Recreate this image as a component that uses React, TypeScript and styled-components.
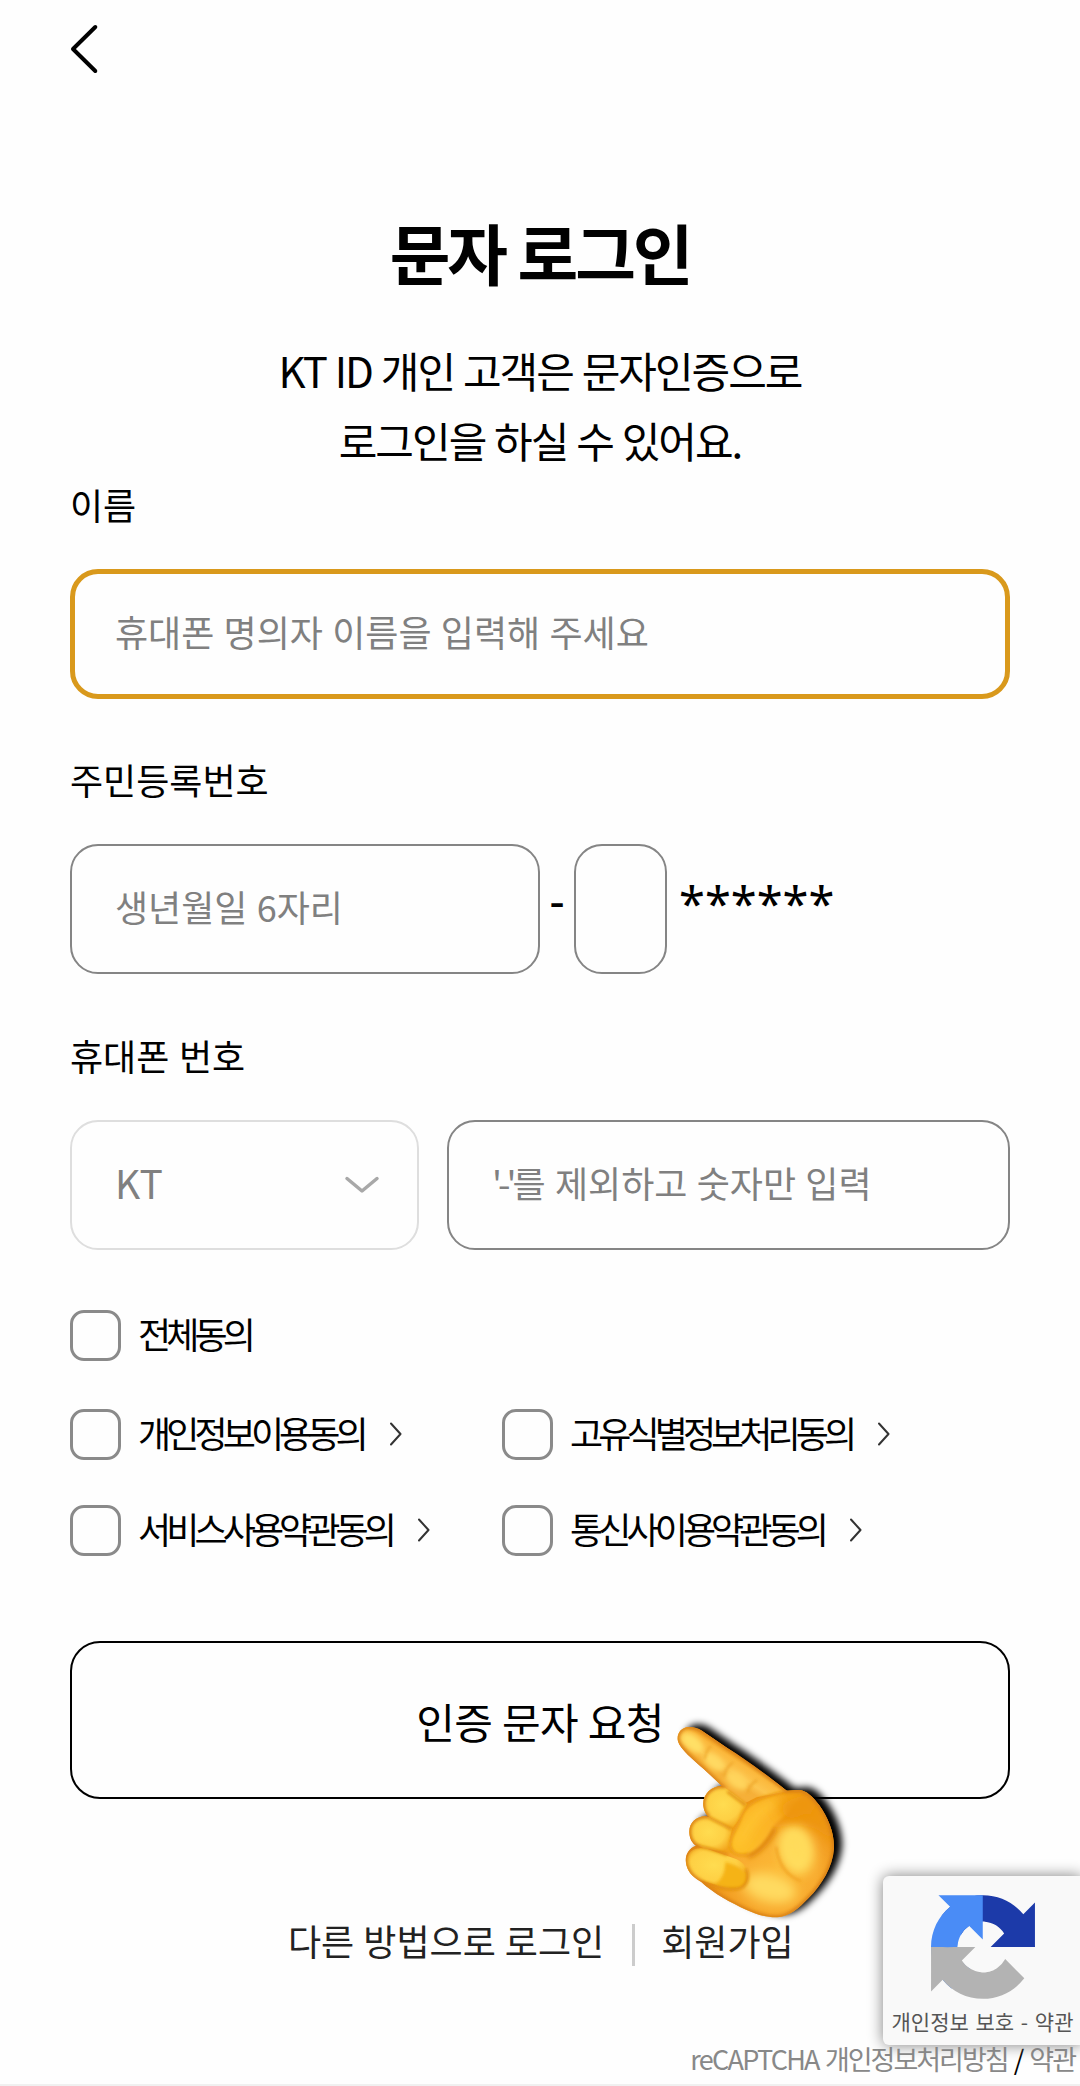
import React from "react";
import styled, { createGlobalStyle } from "styled-components";

const GlobalStyle = createGlobalStyle`
  *, *::before, *::after { box-sizing: border-box; }
  html, body { margin: 0; padding: 0; background: #fefefe; }
  body { font-family: "Noto Sans CJK KR", "Noto Sans", sans-serif; color: #000; }
`;

const Page = styled.main`
  position: relative;
  width: 1080px;
  height: 2086px;
  padding: 0 70px;
  overflow: hidden;
  background: #fefefe;
  border-bottom: 2px solid #f0f0f0;
  display: flex;
  flex-direction: column;
`;

const Header = styled.header`
  height: 97px;
  display: flex;
  align-items: center;
  flex: none;
`;

const IconButton = styled.button`
  padding: 0;
  border: 0;
  background: none;
  display: flex;
`;

const Title = styled.h1`
  margin: 109px 0 0;
  font-size: 66px;
  font-weight: 700;
  line-height: 90px;
  letter-spacing: -3.2px;
  word-spacing: 1px;
  text-align: center;
`;

const Lead = styled.p`
  margin: 39px 0 2px;
  font-size: 42px;
  line-height: 70px;
  letter-spacing: -2px;
  word-spacing: 1.4px;
  text-align: center;
`;

const FormGroup = styled.section<{ $gap: number }>`
  margin-bottom: ${(p) => p.$gap}px;
`;

const Label = styled.div`
  font-size: 36px;
  line-height: 54px;
  margin-bottom: 38px;
  word-spacing: 1.5px;
`;

const FieldRow = styled.div`
  display: flex;
  align-items: center;
`;

const Field = styled.div<{ $width?: number; $tone?: "focus" | "muted" }>`
  width: ${(p) => (p.$width ? `${p.$width}px` : "auto")};
  flex: ${(p) => (p.$width ? "none" : "1")};
  height: 130px;
  padding: 0 ${(p) => (p.$tone === "muted" ? 37 : 43)}px 6px ${(p) => (p.$tone === "focus" ? 40 : 43)}px;
  border: ${(p) => (p.$tone === "focus" ? "5px solid #d9991c" : p.$tone === "muted" ? "2px solid #dedede" : "2px solid #858585")};
  border-radius: 28px;
  display: flex;
  align-items: center;
  justify-content: space-between;
  color: #808080;
  font-size: ${(p) => (p.$tone === "muted" ? 39 : 36)}px;
  word-spacing: 1.2px;
  white-space: nowrap;

  svg { margin-top: 5px; }
`;

const Quoted = styled.span`
  letter-spacing: -4px;
`;

const Dash = styled.span`
  width: 34px;
  padding-bottom: 18px;
  text-align: center;
  font-family: "Noto Sans", sans-serif;
  font-size: 47px;
  line-height: 60px;
`;

const Mask = styled.span`
  margin-left: 12px;
  padding-bottom: 13px;
  font-family: "Noto Sans", sans-serif;
  font-size: 47px;
  line-height: 60px;
`;

const Agreements = styled.section`
  display: grid;
  grid-template-columns: 432px 1fr;
  grid-template-rows: 53px 50px 50px;
  row-gap: 46px;
  margin-bottom: 86px;
`;

const Agreement = styled.div<{ $wide?: boolean }>`
  grid-column: ${(p) => (p.$wide ? "1 / -1" : "auto")};
  height: 50px;
  display: flex;
  align-items: center;
`;

const CheckBox = styled.span`
  width: 51px;
  height: 51px;
  flex: none;
  border: 3px solid #8a8a8a;
  border-radius: 14px;
`;

const AgreementText = styled.span`
  margin-left: 17px;
  padding-bottom: 5px;
  font-size: 36px;
  line-height: 50px;
  letter-spacing: -4.9px;
  white-space: nowrap;
`;

const SubmitButton = styled.button`
  height: 158px;
  flex: none;
  padding: 0;
  border: 2px solid #000;
  border-radius: 30px;
  background: none;
  color: #000;
  font-family: inherit;
  font-size: 42px;
  letter-spacing: -0.6px;
  word-spacing: 0.8px;
`;

const Links = styled.nav`
  margin-top: 114px;
  height: 54px;
  padding-left: 218px;
  display: flex;
  align-items: center;
  gap: 28px;
  font-size: 36px;
  line-height: 54px;
  word-spacing: 1px;
  color: #222;
  white-space: nowrap;
`;

const Divider = styled.i`
  width: 3px;
  height: 42px;
  margin-top: 9px;
  margin-right: -2px;
  background: #ccc;
`;

const Policy = styled.footer`
  margin: auto -65px 3px 0;
  text-align: right;
  font-size: 27px;
  line-height: 44px;
  letter-spacing: -2px;
  word-spacing: 2px;
  color: #888;
  white-space: nowrap;

  b { font-weight: 400; color: #000; margin-right: 1px; }
`;

const Brand = styled.span`
  letter-spacing: -1.7px;
`;

const PointingHand = styled.svg`
  position: absolute;
  left: 640px;
  top: 1680px;
  width: 240px;
  height: 260px;
  overflow: visible;
`;

const Badge = styled.aside`
  position: absolute;
  right: -2px;
  top: 1876px;
  width: 199px;
  height: 169px;
  padding-top: 19px;
  border-radius: 6px 0 0 6px;
  background: #f9f9f9;
  box-shadow: 0 0 15px #808080;
  display: flex;
  flex-direction: column;
  align-items: center;
`;

const BadgeText = styled.span`
  margin-top: 7px;
  font-size: 21px;
  line-height: 30px;
  word-spacing: 2px;
  color: #555;
  white-space: nowrap;
`;

const BackIcon = () => (
  <svg width="30" height="56" viewBox="0 0 30 56" fill="none">
    <path d="M25.300 6 3 28l22.300 22" stroke="#000" strokeWidth="4" strokeLinecap="round" strokeLinejoin="round" />
  </svg>
);

const ChevronDown = () => (
  <svg width="36" height="20" viewBox="0 0 36 20" fill="none">
    <path d="m3 3.500 15 12.500 15-12.500" stroke="#a8a8a8" strokeWidth="3.500" strokeLinecap="round" strokeLinejoin="round" />
  </svg>
);

const MoreIcon = styled(({ className }: { className?: string }) => (
  <svg className={className} width="12" height="24" viewBox="0 0 12 24" fill="none">
    <path d="M1 1.500 10.500 12 1 22.500" stroke="#333" strokeWidth="2" strokeLinecap="round" strokeLinejoin="round" />
  </svg>
))`
  margin-left: 26px;
`;

const RecaptchaLogo = () => (
  <svg width="104" height="104" viewBox="0 0 64 64">
    <path fill="#1c3aa9" d="M64 31.955l-.033-1.370V4.687l-7.160 7.160C50.948 4.674 42.033.093 32.050.093c-10.400 0-19.622 4.960-25.458 12.640l11.736 11.860a15.550 15.550 0 0 1 4.754-5.334c2.050-1.600 4.952-2.906 8.968-2.906.485 0 .860.057 1.135.163 4.976.393 9.288 3.140 11.828 7.124l-8.307 8.307L64 31.953" />
    <path fill="#4a8cf6" d="M31.862.094l-1.370.033H4.594l7.160 7.160C4.580 13.147 0 22.060 0 32.046c0 10.400 4.960 19.622 12.640 25.458L24.500 45.768a15.550 15.550 0 0 1-5.334-4.754c-1.600-2.050-2.906-4.952-2.906-8.968 0-.485.057-.860.163-1.135.393-4.976 3.140-9.288 7.124-11.828l8.307 8.307L31.860.095" />
    <path fill="#b3b3b3" d="M.001 32.045l.033 1.370v25.898l7.160-7.160c5.860 7.173 14.774 11.754 24.760 11.754 10.400 0 19.622-4.960 25.458-12.640l-11.736-11.860a15.550 15.550 0 0 1-4.754 5.334c-2.050 1.600-4.952 2.906-8.968 2.906-.485 0-.860-.057-1.135-.163-4.976-.393-9.288-3.140-11.828-7.124l8.307-8.307c-10.522.040-22.400.066-27.295-.005" />
  </svg>
);

const SILHOUETTE =
  "M150 141C126 139 108 160 114 184C120 207 160 240 192 268L246 318C212 318 186 346 190 378C192 394 198 404 206 410C174 404 146 426 148 458C149 478 158 490 168 497C142 506 132 532 140 558C147 582 164 594 184 606C220 640 272 668 320 690C350 704 382 713 412 712C446 710 476 686 506 654C546 614 578 560 582 506C584 460 564 412 538 376C518 350 500 332 478 330L440 332C380 284 316 238 262 204L186 152C174 145 162 141 150 141Z";

const Hand = () => (
  <PointingHand viewBox="0 0 720 780" aria-hidden="true">
    <defs>
      <filter id="cast" x="-20%" y="-20%" width="140%" height="140%">
        <feGaussianBlur stdDeviation="11" />
      </filter>
      <filter id="soft" filterUnits="userSpaceOnUse" x="0" y="0" width="720" height="780">
        <feGaussianBlur stdDeviation="16" />
      </filter>
      <filter id="line" filterUnits="userSpaceOnUse" x="0" y="0" width="720" height="780">
        <feGaussianBlur stdDeviation="4" />
      </filter>
      <filter id="glow" filterUnits="userSpaceOnUse" x="0" y="0" width="720" height="780">
        <feGaussianBlur stdDeviation="8" />
      </filter>
      <radialGradient id="palm" cx="410" cy="570" r="200" gradientUnits="userSpaceOnUse">
        <stop offset="0" stopColor="#fcb836" />
        <stop offset="0.600" stopColor="#f8ac30" />
        <stop offset="1" stopColor="#ee9418" />
      </radialGradient>
      <linearGradient id="finger" x1="262" y1="204" x2="222" y2="266" gradientUnits="userSpaceOnUse">
        <stop offset="0" stopColor="#ee9c20" />
        <stop offset="0.250" stopColor="#fbb83c" />
        <stop offset="0.700" stopColor="#fdc650" />
        <stop offset="1" stopColor="#f6b038" />
      </linearGradient>
      <radialGradient id="knuckle" cx="0.450" cy="0.420" r="0.620">
        <stop offset="0" stopColor="#ffdc50" />
        <stop offset="0.600" stopColor="#fed044" />
        <stop offset="1" stopColor="#f2a41c" />
      </radialGradient>
      <linearGradient id="thumb" x1="290" y1="510" x2="480" y2="340" gradientUnits="userSpaceOnUse">
        <stop offset="0" stopColor="#fdbe28" />
        <stop offset="0.500" stopColor="#fcb426" />
        <stop offset="1" stopColor="#f29e14" />
      </linearGradient>
      <clipPath id="shape">
        <path d={SILHOUETTE} />
      </clipPath>
    </defs>
    <path d={SILHOUETTE} transform="translate(24 -8)" filter="url(#cast)" />
    <path d={SILHOUETTE} fill="url(#palm)" />
    <g clipPath="url(#shape)">
      <path d="M150 141C100 130 100 180 120 200L246 318L310 372L350 352L446 334L262 204L186 152Z" fill="url(#finger)" />
      <ellipse cx="158" cy="188" rx="38" ry="20" transform="rotate(40 158 188)" fill="#ffe066" filter="url(#glow)" />
      <ellipse cx="222" cy="246" rx="36" ry="20" transform="rotate(38 222 246)" fill="#ffd962" filter="url(#glow)" />
      <ellipse cx="290" cy="302" rx="38" ry="22" transform="rotate(36 290 302)" fill="#ffd45c" filter="url(#glow)" />
      <path d="M214 196C204 206 196 222 194 238M280 246C264 258 254 274 252 290M352 300C336 308 326 322 322 340" stroke="#eda428" strokeWidth="6" fill="none" filter="url(#line)" />
      <path d="M482 332C540 350 590 440 582 506C560 440 480 420 402 446C380 420 430 350 482 332Z" fill="#ee960e" filter="url(#soft)" />
      <ellipse cx="468" cy="512" rx="48" ry="72" fill="#ffdf60" filter="url(#soft)" transform="rotate(-14 468 512)" />
      <ellipse cx="468" cy="500" rx="38" ry="54" fill="#ffdb5a" filter="url(#soft)" transform="rotate(-14 468 500)" />
      <ellipse cx="390" cy="624" rx="80" ry="42" fill="#ffda60" filter="url(#soft)" transform="rotate(14 390 624)" />
      <path d="M408 500C414 552 440 588 484 604" stroke="#f2a424" strokeWidth="8" fill="none" filter="url(#line)" />
      <path d="M190 378C186 336 216 314 252 322L322 372C306 408 290 430 276 446L230 424C206 412 192 400 190 378Z" fill="url(#knuckle)" />
      <path d="M148 458C148 424 176 402 208 412L276 446L268 486L278 520L200 506C168 498 150 484 148 458Z" fill="url(#knuckle)" />
      <path d="M138 546C140 512 168 498 200 506L290 538C316 550 328 574 322 600C314 626 290 630 262 624L190 604C156 594 136 576 138 546Z" fill="url(#knuckle)" />
      <path d="M256 546C290 556 326 570 320 598C314 626 290 630 262 624L226 614Q256 590 256 546Z" fill="#f5b314" filter="url(#line)" />
      <path d="M262 334L318 376M206 412L276 448M168 498C200 500 230 514 262 524M184 606C230 622 280 636 306 622C326 608 326 584 318 566" stroke="#e08e10" strokeWidth="8" fill="none" filter="url(#line)" />
      <path d="M402 442C388 476 358 514 322 526" stroke="#e08810" strokeWidth="22" fill="none" filter="url(#glow)" />
      <path d="M272 502C266 470 292 446 302 414C310 386 330 368 366 354C404 340 440 332 482 332C500 352 430 412 398 440C384 470 356 508 326 520C298 530 278 522 272 502Z" fill="url(#thumb)" filter="url(#line)" />
      <path d="M296 488C316 456 328 424 358 396L400 366" stroke="#ffc934" strokeWidth="22" strokeLinecap="round" fill="none" filter="url(#soft)" />
      <path d="M436 404C460 380 500 366 524 380" stroke="#ee960e" strokeWidth="54" fill="none" filter="url(#soft)" />
      <path d="M326 522C298 530 278 522 272 502C266 470 292 446 302 414C310 386 330 368 366 354C404 340 440 332 482 332" stroke="#e8940f" strokeWidth="6" fill="none" filter="url(#line)" />
      <path d={SILHOUETTE} fill="none" stroke="#d98012" strokeWidth="13" filter="url(#line)" opacity="0.900" />
    </g>
  </PointingHand>
);

const AGREEMENTS = ["개인정보이용동의", "고유식별정보처리동의", "서비스사용약관동의", "통신사이용약관동의"];

const PhoneRow = styled(FieldRow)`
  gap: 28px;
`;

export default function App() {
  return (
    <>
      <GlobalStyle />
      <Page>
        <Header>
          <IconButton aria-label="뒤로">
            <BackIcon />
          </IconButton>
        </Header>
        <Title>문자 로그인</Title>
        <Lead>
          KT ID 개인 고객은 문자인증으로
          <br />
          로그인을 하실 수 있어요.
        </Lead>

        <FormGroup $gap={53}>
          <Label>이름</Label>
          <FieldRow>
            <Field $tone="focus">휴대폰 명의자 이름을 입력해 주세요</Field>
          </FieldRow>
        </FormGroup>

        <FormGroup $gap={54}>
          <Label>주민등록번호</Label>
          <FieldRow>
            <Field $width={470}>생년월일 6자리</Field>
            <Dash>-</Dash>
            <Field $width={93} />
            <Mask>******</Mask>
          </FieldRow>
        </FormGroup>

        <FormGroup $gap={60}>
          <Label>휴대폰 번호</Label>
          <PhoneRow>
            <Field $width={349} $tone="muted">
              KT
              <ChevronDown />
            </Field>
            <Field>
              <span>
                <Quoted>'-'</Quoted>를 제외하고 숫자만 입력
              </span>
            </Field>
          </PhoneRow>
        </FormGroup>

        <Agreements>
          <Agreement $wide>
            <CheckBox />
            <AgreementText>전체동의</AgreementText>
          </Agreement>
          {AGREEMENTS.map((text) => (
            <Agreement key={text}>
              <CheckBox />
              <AgreementText>{text}</AgreementText>
              <MoreIcon />
            </Agreement>
          ))}
        </Agreements>

        <SubmitButton>인증 문자 요청</SubmitButton>

        <Links>
          <span>다른 방법으로 로그인</span>
          <Divider />
          <span>회원가입</span>
        </Links>

        <Policy>
          <Brand>reCAPTCHA</Brand> 개인정보처리방침 <b>/</b> 약관
        </Policy>

        <Hand />
        <Badge>
          <RecaptchaLogo />
          <BadgeText>개인정보 보호 - 약관</BadgeText>
        </Badge>
      </Page>
    </>
  );
}
